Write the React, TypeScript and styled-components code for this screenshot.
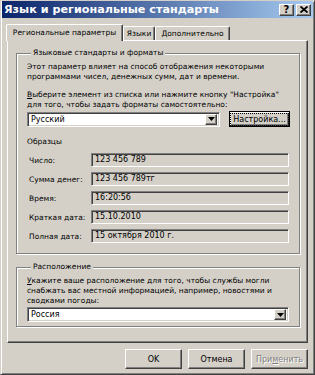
import styled, { createGlobalStyle } from "styled-components";

const GlobalStyle = createGlobalStyle`
  html, body {
    margin: 0;
    padding: 0;
    background: #d4d0c8;
  }
  body {
    font-family: "DejaVu Sans", Tahoma, sans-serif;
    font-size: 7.5px;
    color: #000;
  }
`;

const samples = [
  { label: "Число:", value: "123 456 789" },
  { label: "Сумма денег:", value: "123 456 789тг" },
  { label: "Время:", value: "16:20:56" },
  { label: "Краткая дата:", value: "15.10.2010" },
  { label: "Полная дата:", value: "15 октября 2010 г." },
];

const tabs = [
  { title: "Региональные параметры", width: 117 },
  { title: "Языки", width: 32 },
  { title: "Дополнительно", width: 75 },
];

const DropArrow = () => (
  <StArrowBtn>
    <svg width="7" height="4" viewBox="0 0 7 4">
      <path d="M0 0h7L3.5 4z" fill="#000" />
    </svg>
  </StArrowBtn>
);

const App = () => {
  return (
    <>
      <GlobalStyle />
      <StWindow>
        <StTitleBar>
          <StTitle>Язык и региональные стандарты</StTitle>
          <StCaptionBtn>?</StCaptionBtn>
          <StCaptionBtn>
            <svg width="8" height="7" viewBox="0 0 8 7">
              <path d="M0.5 0.5L7.5 6.5M7.5 0.5L0.5 6.5" stroke="#000" strokeWidth="1.8" />
            </svg>
          </StCaptionBtn>
        </StTitleBar>

        <StTabStrip>
          {tabs.map((t, i) => (
            <StTab key={t.title} active={i === 0} width={t.width}>
              {t.title}
            </StTab>
          ))}
        </StTabStrip>

        <StPanel>
          <StGroup>
            <StLegend>Языковые стандарты и форматы</StLegend>
            <StText>
              Этот параметр влияет на способ отображения некоторыми
              <br />
              программами чисел, денежных сумм, дат и времени.
            </StText>
            <StText gap={8}>
              <u>В</u>ыберите элемент из списка или нажмите кнопку "Настройка"
              <br />
              для того, чтобы задать форматы самостоятельно:
            </StText>
            <StComboRow>
              <StCombo width={193}>
                <span>Русский</span>
                <DropArrow />
              </StCombo>
              <StButton focused width={61} height={16}>
                <StFocus>Настройка...</StFocus>
              </StButton>
            </StComboRow>
            <StSubTitle>Образцы</StSubTitle>
            <StSamples>
              {samples.map((s) => (
                <StSampleRow key={s.label}>
                  <span>{s.label}</span>
                  <StValue>{s.value}</StValue>
                </StSampleRow>
              ))}
            </StSamples>
          </StGroup>

          <StGroup second>
            <StLegend>Расположение</StLegend>
            <StText>
              <u>У</u>кажите ваше расположение для того, чтобы службы могли
              <br />
              снабжать вас местной информацией, например, новостями и
              <br />
              сводками погоды:
            </StText>
            <StComboRow>
              <StCombo width={262}>
                <span>Россия</span>
                <DropArrow />
              </StCombo>
            </StComboRow>
          </StGroup>
        </StPanel>

        <StButtonRow>
          <StButton width={57} height={20}>OK</StButton>
          <StButton width={57} height={20}>Отмена</StButton>
          <StButton width={57} height={20} disabled>
            При<u>м</u>енить
          </StButton>
        </StButtonRow>
      </StWindow>
    </>
  );
};

export default App;

const raised = `
  border: 1px solid;
  border-color: #fff #404040 #404040 #fff;
  box-shadow: inset -1px -1px 0 #808080;
`;

const sunken = `
  border: 1px solid;
  border-color: #808080 #fff #fff #808080;
  box-shadow: inset 1px 1px 0 #404040, inset -1px -1px 0 #d4d0c8;
`;

const StWindow = styled.div`
  box-sizing: border-box;
  width: 315px;
  height: 375px;
  display: flex;
  flex-direction: column;
  padding: 0 1px 2px 1px;
  background: #d4d0c8;
  border: 1px solid;
  border-color: #d4d0c8 #404040 #404040 #d4d0c8;
  box-shadow: inset 1px 1px 0 #fff, inset -1px -1px 0 #808080;
`;

const StTitleBar = styled.div`
  display: flex;
  align-items: center;
  gap: 2px;
  height: 17px;
  padding: 0 2px 0 2px;
  background: linear-gradient(to right, #0a246a, #a6caf0);
`;

const StTitle = styled.div`
  flex: 1;
  color: #fff;
  font-weight: bold;
  font-size: 11.2px;
  white-space: nowrap;
`;

const StCaptionBtn = styled.div`
  box-sizing: border-box;
  width: 15px;
  height: 12px;
  display: flex;
  align-items: center;
  justify-content: center;
  background: #d4d0c8;
  font-family: "DejaVu Sans", sans-serif;
  font-weight: bold;
  font-size: 10px;
  line-height: 1;
  ${raised}
`;

const StTabStrip = styled.div`
  display: flex;
  align-items: flex-end;
  margin: 6px 0 0 4px;
`;

const StTab = styled.div<{ active?: boolean; width: number }>`
  position: relative;
  z-index: ${({ active }) => (active ? 1 : 0)};
  box-sizing: border-box;
  width: ${({ width }) => width}px;
  height: ${({ active }) => (active ? "17px" : "14px")};
  margin-bottom: ${({ active }) => (active ? "-1px" : "0")};
  padding-top: ${({ active }) => (active ? "2px" : "1px")};
  line-height: 11px;
  text-align: center;
  white-space: nowrap;
  background: #d4d0c8;
  border: 1px solid;
  border-bottom: none;
  border-color: #fff #404040 #404040 #fff;
  border-radius: 2px 2px 0 0;
  box-shadow: inset -1px 0 0 #808080;
`;

const StPanel = styled.div`
  box-sizing: border-box;
  width: 301px;
  height: 303px;
  margin-left: 5px;
  padding: 7px 7px 0 8px;
  display: flex;
  flex-direction: column;
  ${raised}
  border-top-color: #fff;
`;

const StGroup = styled.fieldset<{ second?: boolean }>`
  margin: ${({ second }) => (second ? "8px 0 0" : "0")};
  min-inline-size: 0;
  padding: 4px 9px ${({ second }) => (second ? "4px" : "10px")} 10px;
  border: 1px solid #808080;
  box-shadow: inset 1px 1px 0 #fff, 1px 1px 0 #fff;
`;

const StLegend = styled.legend`
  margin-left: 4px;
  padding: 0 2px;
  line-height: 10px;
  background: #d4d0c8;
`;

const StText = styled.div<{ gap?: number }>`
  margin-top: ${({ gap }) => gap ?? 0}px;
  line-height: 10px;
  white-space: nowrap;
`;

const StComboRow = styled.div`
  display: flex;
  align-items: center;
  gap: 9px;
  margin-top: 1px;
`;

const StCombo = styled.div<{ width: number }>`
  box-sizing: border-box;
  width: ${({ width }) => width}px;
  height: 15px;
  display: flex;
  align-items: center;
  justify-content: space-between;
  padding: 0 2px 0 3px;
  background: #fff;
  font-size: 8px;
  ${sunken}
`;

const StArrowBtn = styled.div`
  box-sizing: border-box;
  width: 12px;
  height: 11px;
  display: flex;
  align-items: center;
  justify-content: center;
  background: #d4d0c8;
  ${raised}
`;

const StButton = styled.div<{
  width: number;
  height: number;
  focused?: boolean;
  disabled?: boolean;
}>`
  box-sizing: border-box;
  width: ${({ width }) => width}px;
  height: ${({ height }) => height}px;
  display: flex;
  align-items: center;
  justify-content: center;
  background: #d4d0c8;
  white-space: nowrap;
  font-size: 8px;
  color: ${({ disabled }) => (disabled ? "#808080" : "#000")};
  text-shadow: ${({ disabled }) => (disabled ? "1px 1px 0 #fff" : "none")};
  ${raised}
  ${({ focused }) =>
    focused &&
    `
    border-color: #000;
    box-shadow: inset 1px 1px 0 #fff, inset -1px -1px 0 #404040, inset -2px -2px 0 #808080;
  `}
`;

const StFocus = styled.span`
  padding: 1px 2px;
  border: 1px dotted #000;
`;

const StSubTitle = styled.div`
  margin-top: 10px;
  line-height: 10px;
`;

const StSamples = styled.div`
  display: flex;
  flex-direction: column;
  gap: 5px;
  margin-top: 6px;
  padding: 0 1px 0 2px;
`;

const StSampleRow = styled.div`
  display: grid;
  grid-template-columns: 62px 1fr;
  align-items: center;
`;

const StValue = styled.div`
  box-sizing: border-box;
  height: 14px;
  padding-left: 3px;
  line-height: 12px;
  font-size: 8px;
  white-space: nowrap;
  background: #d4d0c8;
  ${sunken}
`;

const StButtonRow = styled.div`
  display: flex;
  justify-content: flex-end;
  gap: 6px;
  margin-top: 6px;
  padding-right: 5px;
`;
